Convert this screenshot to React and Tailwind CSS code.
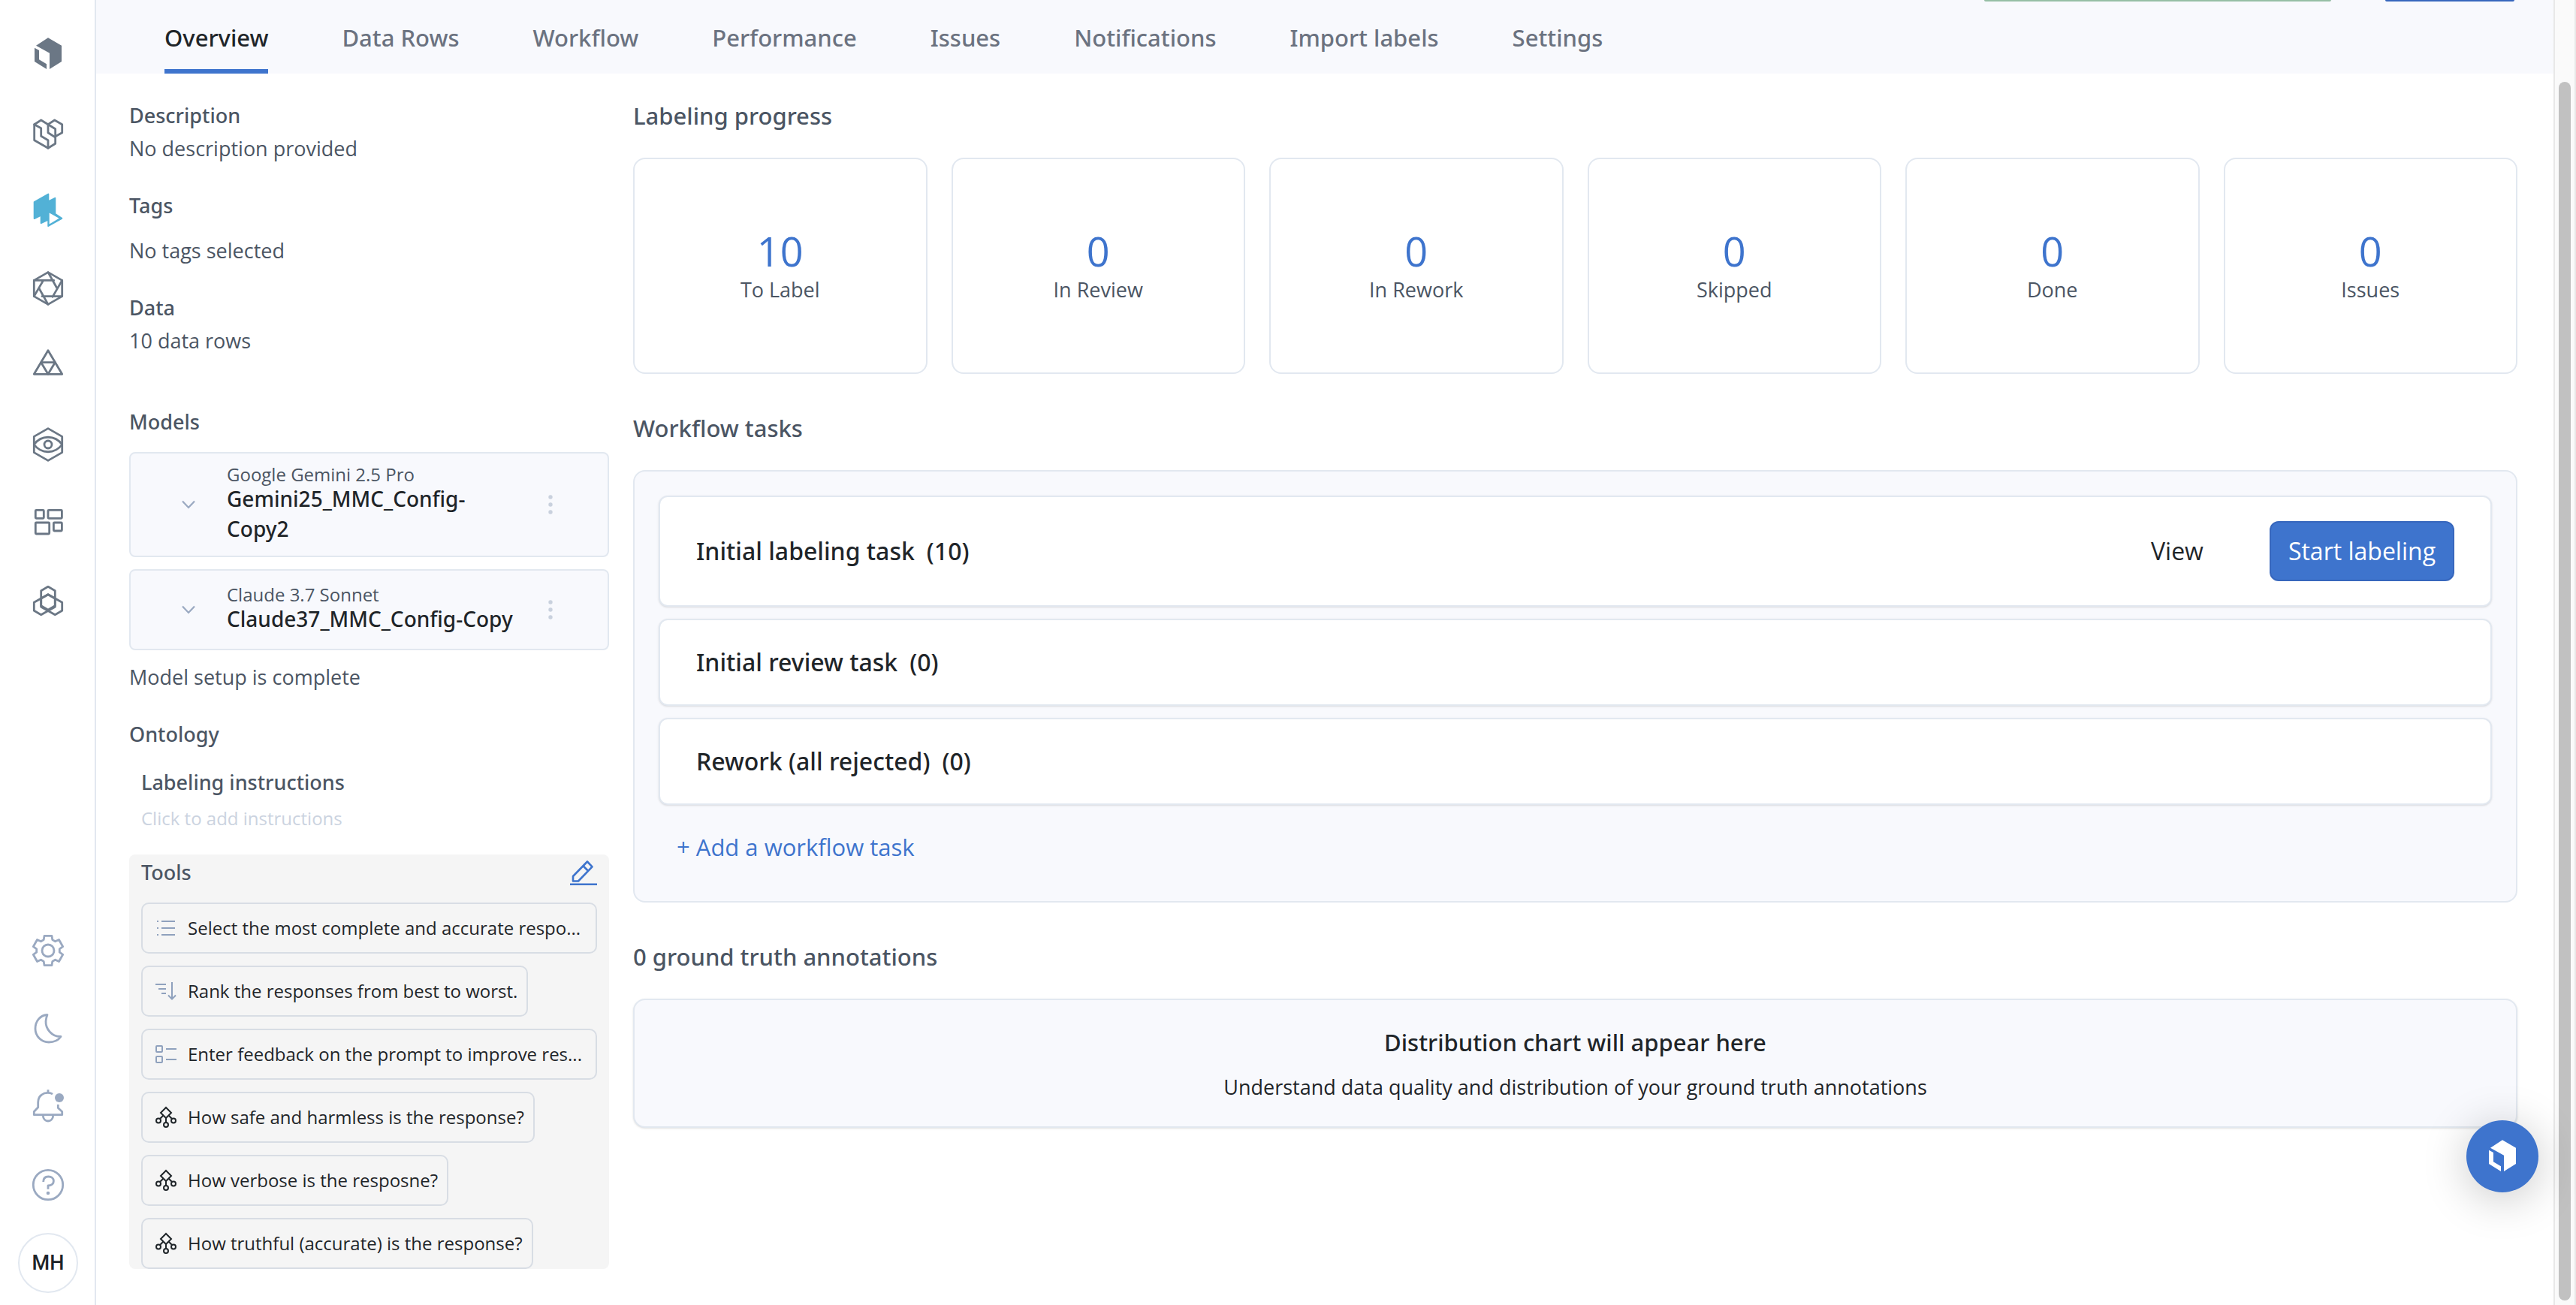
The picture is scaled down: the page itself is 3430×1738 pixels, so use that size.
import React, { useState } from 'react';

const tabs = ['Overview', 'Data Rows', 'Workflow', 'Performance', 'Issues', 'Notifications', 'Import labels', 'Settings'];

const stats = [
    { label: 'To Label', value: 10 },
    { label: 'In Review', value: 0 },
    { label: 'In Rework', value: 0 },
    { label: 'Skipped', value: 0 },
    { label: 'Done', value: 0 },
    { label: 'Issues', value: 0 },
];

const models = [
    { provider: 'Google Gemini 2.5 Pro', name: 'Gemini25_MMC_Config-Copy2' },
    { provider: 'Claude 3.7 Sonnet', name: 'Claude37_MMC_Config-Copy' },
];

const tools = [
    { icon: 'list', label: 'Select the most complete and accurate respo...', full: true },
    { icon: 'rank', label: 'Rank the responses from best to worst.' },
    { icon: 'form', label: 'Enter feedback on the prompt to improve res...', full: true },
    { icon: 'tree', label: 'How safe and harmless is the response?' },
    { icon: 'tree', label: 'How verbose is the resposne?' },
    { icon: 'tree', label: 'How truthful (accurate) is the response?' },
];

// Open Sans has no medium weight, Noto Sans has
const heading = "font-['Noto_Sans',sans-serif] font-medium";

const Logo = ({ className }) => (
    <svg viewBox="0 0 48 48" className={className} fill="currentColor">
        <path d="M8 12.7 24 2.3l18 10.4V34L26 44V22.7z" />
        <path d="M6 15.7 12 19v12.3l10 6V44L6 34z" />
    </svg>
);

const NavIcon = ({ children }) => (
    <svg viewBox="0 0 48 48" className="w-12 h-12" fill="none" stroke="currentColor" strokeWidth="2.8" strokeLinejoin="round" strokeLinecap="round">
        {children}
    </svg>
);

const topNav = [
    {
        name: 'Catalog',
        icon: (
            <NavIcon>
                <path d="M32.7 8l10 5.7v11l-10 5.6-8.7-5.6v-11z" />
                <path d="M24 13.7 14.7 8l-9 5.7v21L24 45.3l9.7-6V19.7z" />
                <path d="M5.7 13.7l9 5v10.6l9.3 5.4v10.6" />
            </NavIcon>
        ),
    },
    {
        name: 'Annotate',
        active: true,
        icon: (
            <NavIcon>
                <path fill="currentColor" strokeWidth="2" d="M5.7 13 24.3 2.5v9.8l9-4.5v21l9 6L24.3 45V36.5L14.7 41V30.5L5.7 35z" />
                <path fill="white" stroke="none" d="M25.7 27.6 38.6 34.8l-12.9 7.6z" />
            </NavIcon>
        ),
    },
    {
        name: 'Model',
        icon: (
            <NavIcon>
                <path d="M24 2.6 42.7 13.4v21.2L24 45.4 5.3 34.6V13.4z" />
                <path d="M5.3 13.4h26.4M24 2.6l12 21.4M42.7 13.4 30 35.4M42.7 34.6H16M24 45.4 12 24M5.3 34.6l12.4-21.2" />
            </NavIcon>
        ),
    },
    {
        name: 'Foundry',
        icon: (
            <NavIcon>
                <path d="M24 2.8 42.7 34.3H5.3z" />
                <path d="M14.7 18.7h18.6L24 34.3z" />
            </NavIcon>
        ),
    },
    {
        name: 'Monitor',
        icon: (
            <NavIcon>
                <path d="M24 2.6 42.7 13.4v21.2L24 45.4 5.3 34.6V13.4z" />
                <path d="M5.3 24C15 11 33 11 42.7 24 33 37 15 37 5.3 24z" />
                <circle cx="24" cy="24" r="5" />
            </NavIcon>
        ),
    },
    {
        name: 'Dashboards',
        icon: (
            <NavIcon>
                <rect x="7.3" y="7.3" width="11" height="11" rx="1" />
                <rect x="24" y="7.3" width="18.4" height="11" rx="1" />
                <rect x="7.3" y="24" width="18.4" height="15" rx="1" />
                <rect x="31.4" y="24" width="11" height="11" rx="1" />
            </NavIcon>
        ),
    },
    {
        name: 'Schema',
        icon: (
            <NavIcon>
                <path d="M24 5.3l9.3 5.4v20L24 36.3l-9.3-5.6v-20z" />
                <path d="M24 15.7l-18.7 10.6v11l9.4 5.4 18.6-10.4V21z" />
                <path d="M24 15.7l18.7 10.6v11l-9.4 5.4-18.6-10.4V21z" />
            </NavIcon>
        ),
    },
];

const bottomNav = [
    {
        name: 'Settings',
        icon: (
            <NavIcon>
                <path d="M19 4.4h10l.8 5.2 3.7 2.2 5-2.3 5.2 9.2-4.4 3.1v4.4l4.4 3.1-5.2 9.2-5-2.3-3.7 2.2-.8 5.2H19l-.8-5.2-3.7-2.2-5 2.3-5.2-9.2 4.4-3.1v-4.4l-4.4-3.1 5.2-9.2 5 2.3 3.7-2.2z" />
                <circle cx="24" cy="24" r="8" />
            </NavIcon>
        ),
    },
    {
        name: 'Dark mode',
        icon: (
            <NavIcon>
                <path d="M23 5.5C13 6 7 14.5 7 24c0 10 8 18 18 18 7 0 13-3 16-7.5C29 35 20.5 24 21 14c.2-3 1-6 2-8.5z" />
            </NavIcon>
        ),
    },
    {
        name: 'Notifications',
        icon: (
            <NavIcon>
                <g strokeLinecap="butt">
                    <path d="M24 1.3V5" />
                    <path d="M30 7.2C27 5 20 4.5 15.5 8 12 10.5 10.7 14 10.7 18v6.7l-5.4 5.8v4.2h37.4v-4.2l-5.4-5V21" />
                    <path d="M17.3 35.5c0 10 13.4 10 13.4 0" />
                </g>
                <circle cx="39" cy="12" r="6" fill="currentColor" stroke="none" />
            </NavIcon>
        ),
    },
    {
        name: 'Help',
        icon: (
            <NavIcon>
                <circle cx="24" cy="24" r="19.7" />
                <path strokeLinecap="butt" d="M17.7 20c0-4.5 2.5-7 6.7-7 4.3 0 7 2.3 7 5.7 0 4-3 6-7.4 6.3v4.7" />
                <circle cx="24" cy="35" r="2.3" fill="currentColor" stroke="none" />
            </NavIcon>
        ),
    },
];

const toolIcons = {
    list: <path d="M2 5h2M8 5h18M2 14h2M8 14h18M2 23h2M8 23h18" />,
    rank: <path d="M0 5h14M4 11h10M8 17h6M22 2v22M17 19.5l5 5 5-5" />,
    form: (
        <>
            <rect x="1" y="3" width="8" height="8" rx="1" />
            <rect x="1" y="17" width="8" height="8" rx="1" />
            <path d="M14 7h14M14 21h14" />
        </>
    ),
    tree: (
        <>
            <path d="M14 1l7 7-7 7-7-7zM14 15v6M10 12l-4 4M18 12l4 4" />
            <circle cx="4" cy="18.5" r="3" />
            <circle cx="24" cy="18.5" r="3" />
            <circle cx="14" cy="24" r="3" />
        </>
    ),
};

const Sidebar = () => (
    <aside className="flex flex-col justify-between w-32 shrink-0 border-r-2 border-[#e2e8f0] pt-5 pb-1 pl-0.5 text-[#6b7785]">
        <nav className="flex flex-col">
            <a href="#home" aria-label="Home" className="flex items-center justify-center h-26">
                <Logo className="w-12 h-12" />
            </a>
            {topNav.map((item) => (
                <a
                    key={item.name}
                    href="#nav"
                    aria-label={item.name}
                    className={`flex items-center justify-center h-26 ${item.active ? 'text-[#52b1d6]' : ''}`}
                >
                    {item.icon}
                </a>
            ))}
        </nav>
        <div className="flex flex-col text-[#9aa9c1]">
            {bottomNav.map((item) => (
                <button key={item.name} aria-label={item.name} className="flex items-center justify-center h-26">
                    {item.icon}
                </button>
            ))}
            <div className="flex items-center justify-center h-26">
                <button className="w-20 h-20 rounded-full border-2 border-[#e2e8f0] font-[Roboto,sans-serif] text-[27px] font-medium text-[#1f2529]">
                    MH
                </button>
            </div>
        </div>
    </aside>
);

const Header = ({ active, setActive }) => (
    <header className="bg-[#f8f9fd]">
        <div className="flex justify-end gap-18 pr-13">
            <div className="w-[462px] h-0.5 rounded-b-sm bg-[#96bfa5]"></div>
            <div className="w-[172px] h-0.5 rounded-b-sm bg-[#3767bd]"></div>
        </div>
        <nav className={`flex gap-[98px] pl-[91px] pt-6 text-[31px] leading-12 text-[#6b7280] ${heading}`}>
            {tabs.map((tab) => (
                <a
                    key={tab}
                    href="#tab"
                    onClick={() => setActive(tab)}
                    className={`border-b-6 pb-[18px] ${active === tab ? 'border-[#3e74cd] text-[#1f2529]' : 'border-transparent'}`}
                >
                    {tab}
                </a>
            ))}
        </nav>
    </header>
);

const ModelCard = ({ model }) => (
    <div className="flex items-center min-h-27 border-2 border-[#e2e8f0] rounded-lg bg-[#f8f9fd] py-4 pl-[62px] pr-[66px]">
        <button aria-label="Expand" className="mr-9 p-[3px] text-[#9aa9c1]">
            <svg viewBox="0 0 24 24" className="w-6 h-6" fill="none" stroke="currentColor" strokeWidth="2.2">
                <path d="M4 7.5l8 8.5 8-8.5" />
            </svg>
        </button>
        <div className="flex-1 min-w-0 pr-8">
            <p className="text-[24px] leading-6">{model.provider}</p>
            <p className={`text-[28px] leading-10 text-[#1f2529] ${heading}`}>{model.name}</p>
        </div>
        <button aria-label="More" className="p-1 text-[#c9d1de]">
            <svg viewBox="0 0 12 28" className="w-3 h-7" fill="currentColor">
                <circle cx="6" cy="4" r="2.7" />
                <circle cx="6" cy="14" r="2.7" />
                <circle cx="6" cy="24" r="2.7" />
            </svg>
        </button>
    </div>
);

const Details = () => (
    <section className="w-[639px] shrink-0 pt-0.5 text-[27px] leading-11">
        <h3 className={heading}>Description</h3>
        <p>No description provided</p>
        <h3 className={`mt-8 ${heading}`}>Tags</h3>
        <p className="mt-4">No tags selected</p>
        <h3 className={`mt-8 ${heading}`}>Data</h3>
        <p>10 data rows</p>

        <h3 className={`mt-16 mb-[18px] ${heading}`}>Models</h3>
        <div className="flex flex-col gap-4">
            {models.map((model) => (
                <ModelCard key={model.name} model={model} />
            ))}
        </div>
        <p className="mt-[14px]">Model setup is complete</p>

        <h3 className={`mt-8 ${heading}`}>Ontology</h3>
        <div className="px-4 mt-5">
            <h4 className={heading}>Labeling instructions</h4>
            <button className="block mt-2.5 text-[24px] leading-8 text-[#cbd3e0]">Click to add instructions</button>
        </div>

        <div className="mt-8 px-4 pt-0.5 rounded-lg bg-[#f5f5f5]">
            <div className="flex items-center justify-between">
                <h4 className={heading}>Tools</h4>
                <button aria-label="Edit tools" className="text-[#3e74cd]">
                    <svg viewBox="0 0 36 36" className="w-9 h-9" fill="none" stroke="currentColor" strokeWidth="2.6" strokeLinejoin="round">
                        <path d="M4 29.5V23L23 3.5l6.5 6.8L11 29.5zM17.5 9.3l6.5 6.4M0 33.8h36" />
                    </svg>
                </button>
            </div>
            <ul className="flex flex-col items-start gap-4 mt-[18px]">
                {tools.map((tool) => (
                    <li
                        key={tool.label}
                        className={`flex items-center h-17 gap-[15px] pl-[17px] pr-3 border-2 border-[#d8dde4] rounded-[10px] text-[24px] text-[#1f2529] ${tool.full ? 'w-full' : ''}`}
                    >
                        <svg
                            viewBox="0 0 28 28"
                            className={`w-7 h-7 shrink-0 overflow-visible ${tool.icon === 'tree' ? 'text-[#1f2529]' : 'text-[#8fa1bd]'}`}
                            fill="none"
                            stroke="currentColor"
                            strokeWidth="2"
                        >
                            {toolIcons[tool.icon]}
                        </svg>
                        <span className="whitespace-nowrap">{tool.label}</span>
                    </li>
                ))}
            </ul>
        </div>
    </section>
);

const Task = ({ name, count, children }) => (
    <div className="flex items-center justify-between min-h-29 px-12 border-2 border-[#e2e8f0] rounded-xl bg-white shadow-sm text-[32px] leading-12 text-[#1f2529]">
        <p className={`flex gap-4 ${heading}`}>
            <span>{name}</span>
            <span>({count})</span>
        </p>
        {children}
    </div>
);

const Progress = () => (
    <section className="flex-1 min-w-0">
        <h2 className={`text-[31px] leading-12 mb-8 ${heading}`}>Labeling progress</h2>
        <div className="grid grid-cols-6 gap-8">
            {stats.map((stat) => (
                <div key={stat.label} className="flex flex-col items-center justify-center h-72 pt-1 border-2 border-[#e2e8f0] rounded-2xl">
                    <span className="text-[54px] leading-15 text-[#3e74cd]">{stat.value}</span>
                    <span className="text-[27px] leading-11">{stat.label}</span>
                </div>
            ))}
        </div>

        <h2 className={`text-[31px] leading-12 mt-12 mb-8 ${heading}`}>Workflow tasks</h2>
        <div className="flex flex-col gap-4 p-8 pb-12 border-2 border-[#e2e8f0] rounded-2xl bg-[#f8f9fd]">
            <Task name="Initial labeling task" count={10}>
                <div className="flex items-center gap-[88px] py-8">
                    <button>View</button>
                    <button className="h-20 px-[23px] border-2 border-[#3767bd] rounded-xl bg-[#3e74cd] text-white">Start labeling</button>
                </div>
            </Task>
            <Task name="Initial review task" count={0} />
            <Task name="Rework (all rejected)" count={0} />
            <button className="self-start mt-4 ml-6 text-[31px] leading-12 text-[#3e74cd]">+ Add a workflow task</button>
        </div>

        <h2 className={`text-[31px] leading-12 mt-12 mb-8 ${heading}`}>0 ground truth annotations</h2>
        <div className="px-8 pt-8 pb-[30px] border-2 border-[#e2e8f0] rounded-2xl bg-[#f8f9fd] shadow-sm text-center text-[#1f2529]">
            <h3 className={`text-[31px] leading-12 ${heading}`}>Distribution chart will appear here</h3>
            <p className="text-[27px] leading-11 mt-[14px]">Understand data quality and distribution of your ground truth annotations</p>
        </div>
    </section>
);

const App = () => {
    const [active, setActive] = useState('Overview');

    return (
        <div className="flex h-screen overflow-hidden bg-white font-['Open_Sans',sans-serif] text-[#4b5563]">
            <Sidebar />
            <div className="flex-1 min-w-0">
                <Header active={active} setActive={setActive} />
                <main className="flex items-start gap-8 pt-8 pl-11 pr-12">
                    <Details />
                    <Progress />
                </main>
            </div>
            <div className="flex justify-center w-[30px] shrink-0 pt-[109px] pb-1.5 border-l-2 border-r-2 border-[#e8e8e8] bg-[#fafafa]">
                <div className="w-4 h-full rounded-full bg-[#c1c1c1]"></div>
            </div>
            <button
                aria-label="Open assistant"
                className="fixed right-[50px] bottom-[150px] flex items-center justify-center w-24 h-24 rounded-full bg-[#3e74cd] text-white shadow-[0_8px_60px_rgba(0,0,0,0.22)]"
            >
                <Logo className="w-12 h-12" />
            </button>
        </div>
    );
};

export default App;
